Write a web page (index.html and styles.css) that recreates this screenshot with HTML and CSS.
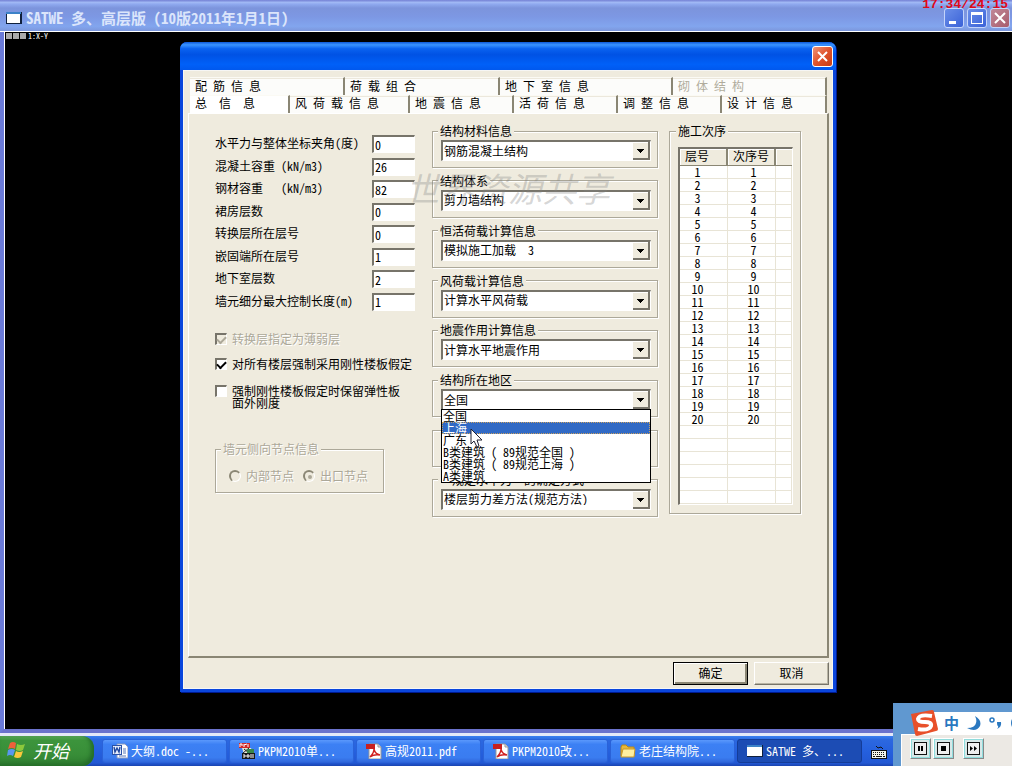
FILE: index.html
```html
<!DOCTYPE html>
<html lang="zh-CN">
<head>
<meta charset="utf-8">
<title>SATWE</title>
<link rel="stylesheet" href="styles.css">
</head>
<body>
<header class="titlebar">
  <svg class="app-icon" width="16" height="12" viewBox="0 0 16 12"><path d="M0 0h16v12H0z" fill="#10203c"/><path d="M0 0h15v2H0z" fill="#3c82c8"/><path d="M1 2h13v9H1z" fill="#fff"/></svg>
  <h1 class="app-title">SATWE 多、高层版 (10版2011年1月1日)</h1>
  <div class="win-buttons">
    <button class="win-btn" aria-label="最小化"><svg width="18" height="18" viewBox="0 0 18 18"><path d="M4 12h7v3H4z" fill="#fff"/></svg></button>
    <button class="win-btn" aria-label="最大化"><svg width="18" height="18" viewBox="0 0 18 18"><path d="M3 3h12v12H3zM4 6v8h10V6z" fill="#fff" fill-rule="evenodd"/></svg></button>
    <button class="win-btn win-close" aria-label="关闭"><svg width="18" height="18" viewBox="0 0 18 18"><path d="M4 4l10 10M14 4L4 14" stroke="#fff" stroke-width="2"/></svg></button>
  </div>
  <div class="timer">17:34/24:15</div>
</header>

<main class="canvas">
  <div class="view-tag"><i></i><i></i><i></i><span>1:X-Y</span></div>
</main>

<section class="dialog" role="dialog" aria-label="SATWE">
  <div class="dialog-bar">
    <button class="dialog-close" aria-label="关闭"><svg width="19" height="19" viewBox="0 0 19 19"><path d="M5 5l9 9M14 5l-9 9" stroke="#fff" stroke-width="2"/></svg></button>
  </div>
  <div class="dialog-body">
    <div class="tabs" role="tablist">
      <div class="tab-row tab-row-back">
        <button class="tab" role="tab">配 筋 信 息</button>
        <button class="tab" role="tab">荷 载 组 合</button>
        <button class="tab" role="tab">地 下 室 信 息</button>
        <button class="tab" role="tab" disabled>砌 体 结 构</button>
      </div>
      <div class="tab-row tab-row-front">
        <button class="tab tab-on" role="tab" aria-selected="true">总  信  息</button>
        <button class="tab" role="tab">风 荷 载 信 息</button>
        <button class="tab" role="tab">地 震 信 息</button>
        <button class="tab" role="tab">活 荷 信 息</button>
        <button class="tab" role="tab">调 整 信 息</button>
        <button class="tab" role="tab">设 计 信 息</button>
      </div>
    </div>

    <div class="panel">
      <div class="col-left">
        <div class="fields">
          <label for="f1">水平力与整体坐标夹角(度)</label><input id="f1" value="0">
          <label for="f2">混凝土容重 (kN/m3)</label><input id="f2" value="26">
          <label for="f3">钢材容重   (kN/m3)</label><input id="f3" value="82">
          <label for="f4">裙房层数</label><input id="f4" value="0">
          <label for="f5">转换层所在层号</label><input id="f5" value="0">
          <label for="f6">嵌固端所在层号</label><input id="f6" value="1">
          <label for="f7">地下室层数</label><input id="f7" value="2">
          <label for="f8">墙元细分最大控制长度(m)</label><input id="f8" value="1">
        </div>
        <div class="checks">
          <label class="check off"><input type="checkbox" checked disabled><span>转换层指定为薄弱层</span></label>
          <label class="check"><input type="checkbox" checked><span>对所有楼层强制采用刚性楼板假定</span></label>
          <label class="check"><input type="checkbox"><span>强制刚性楼板假定时保留弹性板<br>面外刚度</span></label>
        </div>
        <fieldset class="group nodes" disabled>
          <legend>墙元侧向节点信息</legend>
          <label><input type="radio" name="node"><span>内部节点</span></label>
          <label><input type="radio" name="node" checked><span>出口节点</span></label>
        </fieldset>
      </div>

      <div class="col-mid">
        <fieldset class="group"><legend>结构材料信息</legend><select aria-label="结构材料信息"><option>钢筋混凝土结构</option></select></fieldset>
        <fieldset class="group"><legend>结构体系</legend><select aria-label="结构体系"><option>剪力墙结构</option></select></fieldset>
        <fieldset class="group"><legend>恒活荷载计算信息</legend><select aria-label="恒活荷载计算信息"><option>模拟施工加载&nbsp; 3</option></select></fieldset>
        <fieldset class="group"><legend>风荷载计算信息</legend><select aria-label="风荷载计算信息"><option>计算水平风荷载</option></select></fieldset>
        <fieldset class="group"><legend>地震作用计算信息</legend><select aria-label="地震作用计算信息"><option>计算水平地震作用</option></select></fieldset>
        <fieldset class="group region"><legend>结构所在地区</legend><select aria-label="结构所在地区"><option>全国</option></select>
          <ul class="menu" role="listbox">
            <li role="option">全国</li>
            <li role="option" class="hot" aria-selected="true">上海</li>
            <li role="option">广东</li>
            <li role="option">B类建筑 ( 89规范全国 )</li>
            <li role="option">B类建筑 ( 89规范上海 )</li>
            <li role="option">A类建筑</li>
          </ul>
        </fieldset>
        <fieldset class="group bare"></fieldset>
        <fieldset class="group"><legend>“规定水平力”的确定方式</legend><select aria-label="“规定水平力”的确定方式"><option>楼层剪力差方法(规范方法)</option></select></fieldset>
      </div>

      <fieldset class="group col-right">
        <legend>施工次序</legend>
        <table class="order">
          <colgroup><col class="c1"><col class="c2"><col></colgroup>
          <thead><tr><th>层号</th><th>次序号</th><th></th></tr></thead>
          <tbody>
            <tr><td>1</td><td>1</td><td></td></tr>
            <tr><td>2</td><td>2</td><td></td></tr>
            <tr><td>3</td><td>3</td><td></td></tr>
            <tr><td>4</td><td>4</td><td></td></tr>
            <tr><td>5</td><td>5</td><td></td></tr>
            <tr><td>6</td><td>6</td><td></td></tr>
            <tr><td>7</td><td>7</td><td></td></tr>
            <tr><td>8</td><td>8</td><td></td></tr>
            <tr><td>9</td><td>9</td><td></td></tr>
            <tr><td>10</td><td>10</td><td></td></tr>
            <tr><td>11</td><td>11</td><td></td></tr>
            <tr><td>12</td><td>12</td><td></td></tr>
            <tr><td>13</td><td>13</td><td></td></tr>
            <tr><td>14</td><td>14</td><td></td></tr>
            <tr><td>15</td><td>15</td><td></td></tr>
            <tr><td>16</td><td>16</td><td></td></tr>
            <tr><td>17</td><td>17</td><td></td></tr>
            <tr><td>18</td><td>18</td><td></td></tr>
            <tr><td>19</td><td>19</td><td></td></tr>
            <tr><td>20</td><td>20</td><td></td></tr>
            <tr><td></td><td></td><td></td></tr>
            <tr><td></td><td></td><td></td></tr>
            <tr><td></td><td></td><td></td></tr>
            <tr><td></td><td></td><td></td></tr>
            <tr><td></td><td></td><td></td></tr>
            <tr><td></td><td></td><td></td></tr>
          </tbody>
        </table>
      </fieldset>
    </div>

    <div class="actions">
      <button class="push push-default">确定</button>
      <button class="push">取消</button>
    </div>
  </div>
</section>

<div class="watermark">世界资源共享</div>
<svg class="cursor" width="13" height="20" viewBox="0 0 13 20"><path d="M1 1v15l3-3 3 6 2-1-2-6h5z" fill="#fff" stroke="#223" stroke-width="1"/></svg>

<footer class="taskbar">
  <button class="start">
    <svg width="19" height="18" viewBox="0 0 19 18"><path d="M3 2q3-2 6 0L8 8Q5 6 1 8z" fill="#f0603a"/><path d="M10 3q4 2 8 0l-2 6q-3 2-7 0z" fill="#8cc83c"/><path d="M1 9q4-2 7 0l-2 6q-3-2-6 0z" fill="#5a96f0"/><path d="M9 10q3 2 7 0l-2 6q-3 2-7 0z" fill="#fac83c"/></svg>
    <span>开始</span>
  </button>
  <nav class="tasks">
    <button class="task"><svg width="16" height="16" viewBox="0 0 16 16"><path d="M5 1h8l3 3v11H5z" fill="#fff" stroke="#8899c0"/><path d="M11 6h3M11 8h3M11 10h3M7 13h7" stroke="#5878b8"/><path d="M0 2h10v10H0z" fill="#2a52a8"/><path d="M1 3h8v8H1z" fill="#e6eefc"/><path d="M2 4l1 5 2-4 2 4 1-5" fill="none" stroke="#2048a0" stroke-width="1.4"/></svg><span>大纲.doc -...</span></button>
    <button class="task"><svg width="16" height="16" viewBox="0 0 16 16"><path d="M0 0h11v5H0z" fill="#d02828"/><path d="M1 4V1h2v2M5 4V1M5 2l3-1M9 4V1" stroke="#fff" fill="none"/><path d="M3 5h9l2 6H5z" fill="#e8e8d8"/><path d="M5 6l5 4M10 5l-6 5" stroke="#222"/><path d="M8 6h7v4H8z" fill="#388848"/><path d="M3 10h13v6H3z" fill="#181818"/><path d="M4 12h2v2H4M8 12h2v2H8zM12 11v4M14 11v4" stroke="#fff" fill="none"/></svg><span>PKPM2010单...</span></button>
    <button class="task"><svg width="16" height="16" viewBox="0 0 16 16"><path d="M3 1h9l3 3v12H3z" fill="#fff" stroke="#999"/><path d="M12 1v3h3" fill="#ddd" stroke="#999"/><path d="M0 1h9v5H0z" fill="#c82020"/><path d="M4 14q4-4 4-8 1 5 6 6-6-1-10 2z" fill="none" stroke="#d02020" stroke-width="1.4"/></svg><span>高规2011.pdf</span></button>
    <button class="task"><svg width="16" height="16" viewBox="0 0 16 16"><path d="M3 1h9l3 3v12H3z" fill="#fff" stroke="#999"/><path d="M12 1v3h3" fill="#ddd" stroke="#999"/><path d="M0 1h9v5H0z" fill="#c82020"/><path d="M4 14q4-4 4-8 1 5 6 6-6-1-10 2z" fill="none" stroke="#d02020" stroke-width="1.4"/></svg><span>PKPM2010改...</span></button>
    <button class="task"><svg width="16" height="16" viewBox="0 0 16 16"><path d="M1 13V4l1-2h4l2 2h6v9z" fill="#e8b838" stroke="#b88818"/><path d="M1 14l2-8h12l-1 8z" fill="#fff0a0" stroke="#c89828"/></svg><span>老庄结构院...</span></button>
    <button class="task task-on"><svg width="16" height="12" viewBox="0 0 16 12"><path d="M0 0h16v12H0z" fill="#10203c"/><path d="M0 0h15v2H0z" fill="#3c82c8"/><path d="M0 2h15v9H0z" fill="#fff"/></svg><span>SATWE 多、...</span></button>
  </nav>
  <svg class="keys" width="16" height="13" viewBox="0 0 16 13"><path d="M5 0l2 2 3-1 2 2" stroke="#111" fill="none"/><path d="M0 4h16v9H0z" fill="#111"/><path d="M1 5h14v7H1z" fill="#f4f4e8"/><path d="M2 6.5h12M2 8.500h12" stroke="#111" stroke-dasharray="1 1"/><path d="M2 10.500h2M5 10.500h6M12 10.500h2" stroke="#111"/></svg>
</footer>

<aside class="ime">
  <div class="ime-bar">
    <svg class="ime-logo" width="28" height="28" viewBox="0 0 28 28"><path d="M1 5L22 1q2 0 2 2l4 17q0 2-2 2L7 27q-2 0-2-2z" fill="#e8502a"/><path d="M22 7Q9 5 8 10q0 3 7 3 7 0 6 4-2 5-13 3" fill="none" stroke="#fff" stroke-width="4"/></svg>
    <span class="ime-mode">中</span>
    <svg width="14" height="15" viewBox="0 0 14 15"><path d="M8 0q7 4 5 10-4 7-13 2 8 0 9-5 1-3-1-7z" fill="#2a78c0"/></svg>
    <svg width="13" height="13" viewBox="0 0 13 13"><circle cx="3" cy="3" r="2" fill="none" stroke="#2a78c0" stroke-width="1.500"/><path d="M8 5h4q1 5-4 7 2-2 1-3-1 0-1-4z" fill="#2a78c0"/></svg>
    <svg width="8" height="16" viewBox="0 0 8 16"><circle cx="9" cy="8" r="7" fill="none" stroke="#2a78c0" stroke-width="2"/></svg>
  </div>
  <div class="player">
    <button aria-label="暂停"><svg width="13" height="13" viewBox="0 0 13 13"><path d="M0 0h13v13H0z" fill="#111"/><path d="M1 1h11v11H1z" fill="#eee"/><path d="M4 4h2v5H4zM7 4h2v5H7z" fill="#000"/></svg></button>
    <button aria-label="停止"><svg width="13" height="13" viewBox="0 0 13 13"><path d="M0 0h13v13H0z" fill="#111"/><path d="M1 1h11v11H1z" fill="#eee"/><path d="M4 4h5v5H4z" fill="#000"/></svg></button>
    <button class="apart" aria-label="快进"><svg width="13" height="13" viewBox="0 0 13 13"><path d="M0 0h13v13H0z" fill="#111"/><path d="M1 1h11v11H1z" fill="#eee"/><path d="M3 4l3 2.500L3 9zM7 4l3 2.500L7 9z" fill="#000"/></svg></button>
  </div>
</aside>
</body>
</html>
```
FILE: styles.css
```css
* { box-sizing: border-box; }
html { height: 100%; }
body {
  margin: 0;
  height: 100%;
  display: flex;
  flex-direction: column;
  overflow: hidden;
  position: relative;
  background: #000;
  color: #000;
  font: 12px/12px "Noto Sans Mono CJK SC", "Noto Sans CJK SC", sans-serif;
}
button, input, select { font: inherit; color: inherit; margin: 0; border-radius: 0; }
svg { display: block; flex: none; }

/* main window */
.titlebar {
  flex: none;
  display: flex;
  align-items: center;
  height: 32px;
  padding: 4px 2px 0 6px;
  border-bottom: 1px solid #fff;
  background: linear-gradient(#7480d4, #a0b8f4 8%, #8ea8ee 14%, #7c94dc 26%, #7d98e4 55%, #82a5ee 85%, #7c97dc);
  position: relative;
}
.app-title { margin: 0 0 0 4px; font-size: 15px; line-height: 16px; font-weight: 700; color: #dbe5fb; white-space: pre; }
.win-buttons { margin-left: auto; display: flex; gap: 3px; }
.win-btn { width: 20px; height: 20px; padding: 0; border: 1px solid #c4d4fa; border-radius: 3px; background: linear-gradient(135deg, #6a8ee8, #3a62d8); }
.win-close { background: linear-gradient(135deg, #c08898, #a85c6c); }
.timer { position: absolute; right: 4px; top: -2px; font: 700 13px/13px "Liberation Mono", monospace; color: #e00818; }

.canvas { flex: 1; background: #000; border-left: 4px solid #6a7ad8; border-bottom: 4px solid #6a72cc; }
.view-tag { display: flex; gap: 1px; align-items: flex-start; padding-left: 1px; border-left: 1px solid #fff; height: 100%; color: #fff; font-size: 8px; line-height: 8px; }
.view-tag i { width: 6px; height: 6px; margin-top: 1px; background: #aaa; }
.view-tag span { margin-left: 1px; }

/* dialog window */
.dialog {
  position: absolute;
  left: 180px;
  top: 42px;
  width: 656px;
  border: 3px solid #0a46dc;
  border-top: 0;
  border-radius: 7px 7px 0 0;
  background: #0a46dc;
  box-shadow: inset 1px 0 #0831c0, 1px 1px #001a90;
}
.dialog-bar { height: 28px; margin: 0 -3px; padding: 0 3px; display: flex; align-items: center; justify-content: flex-end; border-radius: 7px 7px 0 0; background: linear-gradient(#0c58d8, #3a94ff 10%, #0a62f0 24%, #0052e4 45%, #0060f8 80%, #0058ee); }
.dialog-close { width: 21px; height: 21px; padding: 0; border: 1px solid #fff; border-radius: 3px; background: linear-gradient(135deg, #ee9478, #e0532c 50%, #c83c14); }
.dialog-body { background: #efebde; border: 1px solid #f6f6f4; padding: 6px 3px 3px 4px; }

.tabs { padding: 0 2px; }
.tab-row-back { display: grid; grid-template-columns: 155px 155px 173px 1fr; }
.tab-row-front { display: grid; grid-template-columns: 100px 120px 104px 104px 104px 1fr; }
.tab { height: 18px; padding: 0 0 2px 5px; border: 0; border-top: 1px solid #fbfaf4; border-right: 2px solid #8a8674; background: #fcfcfa; text-align: left; white-space: pre; box-shadow: inset 0 1px #ece8dc; }
.tab-row-front .tab { padding-bottom: 3px; }
.tab:disabled { color: #b0ac9c; }
.tab-on { background: #fff; box-shadow: none; }

.panel {
  display: flex;
  align-items: flex-start;
  height: 545px;
  padding: 10px 26px 0 26px;
  border: 1px solid #fff;
  border-right: 2px solid #8a8674;
  border-bottom: 2px solid #8a8674;
}
.col-left { width: 217px; flex: none; padding-top: 11px; }
.fields { display: grid; grid-template-columns: 157px 43px; grid-auto-rows: 1fr; height: 180px; align-items: start; white-space: pre; }
.fields label { line-height: 16px; }
.fields input { width: 43px; height: 18px; padding: 0 1px 1px; border: 2px solid; border-color: #77746a #fff #fff #77746a; border-width: 2px 1px 1px 2px; background: #fff; }

.checks { display: grid; gap: 13px; margin-top: 18px; }
.check { display: flex; gap: 5px; align-items: flex-start; white-space: nowrap; }
.check:nth-child(3) { margin-top: 2px; }
.check input { appearance: none; flex: none; width: 12px; height: 12px; border: 1px solid; border-color: #77746a #fff #fff #77746a; border-width: 2px 1px 1px 2px; background: #fff; display: grid; place-items: center; }
.check input:checked::before { content: ""; width: 7px; height: 4px; border-left: 2px solid #000; border-bottom: 2px solid #000; transform: rotate(-45deg); margin-bottom: 2px; }
.off { color: #aca899; text-shadow: 1px 1px #fff; }
.check.off input { background: #efebde; }
.check.off input:checked::before { border-color: #aca899; }

.group { margin: 0; min-width: 0; padding: 0 6px 5px 7px; border: 1px solid #aca899; box-shadow: 1px 1px #fff, inset 1px 1px #fff; }
.group legend { padding: 0 2px; margin-left: -2px; background: #efebde; line-height: 14px; }
.nodes { display: flex; align-items: flex-start; gap: 9px; width: 169px; height: 51px; margin-top: 33px; padding: 14px 0 0 13px; color: #aca899; text-shadow: 1px 1px #fff; }
.nodes legend { margin-left: -8px; }
.nodes label { display: flex; gap: 5px; align-items: center; }
.nodes input { appearance: none; width: 12px; height: 12px; border-radius: 50%; border: 1px solid; border-color: #8a8674 #fff #fff #8a8674; border-width: 2px 1px 1px 2px; display: grid; place-items: center; }
.nodes input:checked::before { content: ""; width: 4px; height: 4px; border-radius: 50%; background: #aca899; }

.col-mid { width: 226px; flex: none; height: 393px; display: flex; flex-direction: column; justify-content: space-between; }
.col-mid .group { height: 44px; flex: none; padding: 2px 6px 0 8px; }
.col-mid .group legend { margin-left: -3px; }
.col-mid .bare { height: 37px; margin-top: 7px; }
.col-mid select {
  display: block;
  width: 100%;
  height: 21px;
  padding: 0 1px 1px;
  appearance: none;
  border: 2px solid;
  border-color: #77746a #fff #fff #77746a;
  border-width: 2px 1px 1px 2px;
  background:
    linear-gradient(#000, #000) right 6px top 7px / 7px 1px no-repeat,
    linear-gradient(#000, #000) right 7px top 8px / 5px 1px no-repeat,
    linear-gradient(#000, #000) right 8px top 9px / 3px 1px no-repeat,
    linear-gradient(#000, #000) right 9px top 10px / 1px 1px no-repeat,
    linear-gradient(#efebde, #efebde) right 2px top 1px / 15px 15px no-repeat,
    linear-gradient(#fff, #fff) right 2px top 0 / 16px 16px no-repeat,
    linear-gradient(#77746a, #77746a) right 0 top 0 / 17px 18px no-repeat,
    #fff;
}
.region { position: relative; }
.menu { position: absolute; z-index: 2; left: 8px; right: 6px; top: 22px; margin: 0; padding: 0; list-style: none; border: 1px solid #000; background: #fff; }
.menu li { padding: 0 1px; line-height: 12px; white-space: pre; }
.menu .hot { background: #316ac5; color: #fff; outline: 1px dotted #c8a060; outline-offset: -1px; }

.col-right { width: 133px; margin-left: 11px; padding: 9px 7px 8px 8px; }
.order { width: 100%; table-layout: fixed; border-collapse: separate; border-spacing: 0; border: 2px solid; border-color: #77746a #fff #fff #77746a; border-width: 2px 1px 1px 2px; background: #fff; }
.c1 { width: 48px; }
.c2 { width: 48px; }
.order th { height: 17px; padding: 0 0 2px 5px; background: #efebde; text-align: left; font-weight: 400; border-right: 2px solid #8a8674; border-bottom: 1px solid #8a8674; box-shadow: inset 1px 1px #fff; white-space: nowrap; }
.order th:last-child { border-right: 0; }
.order td { height: 13px; padding: 0; line-height: 12px; border-right: 1px solid #e8e4d6; border-bottom: 1px solid #e8e4d6; text-align: center; padding-right: 12px; }
.order td + td { padding: 0 0 0 4px; }

.actions { display: flex; justify-content: flex-end; gap: 6px; padding-top: 4px; }
.push { width: 75px; height: 23px; padding: 0 0 2px; border: 1px solid; border-color: #fff #77746a #77746a #fff; background: #efebde; box-shadow: inset -1px -1px #b8b4a4; }
.push-default { border-color: #000; box-shadow: inset 1px 1px #fff, inset -2px -2px #8a8674; }

.watermark { position: absolute; left: 406px; top: 169px; font-size: 34px; line-height: 38px; font-style: italic; color: rgba(130, 130, 130, .32); pointer-events: none; white-space: nowrap; }
.cursor { position: absolute; left: 470px; top: 428px; z-index: 3; }

/* taskbar */
.taskbar { flex: none; display: flex; align-items: stretch; height: 33px; border-top: 3px solid #e4e8f8; background: linear-gradient(#3a80f0, #2c68e0 12%, #2560de 50%, #2258d4 90%, #1a44b0); }
.start { width: 94px; display: flex; align-items: center; gap: 7px; padding: 0 0 2px 7px; border: 0; border-radius: 0 12px 12px 0; background: linear-gradient(#5aa85a, #3c943c 15%, #388e38 60%, #2f7c30); color: #fff; font-size: 18px; line-height: 24px; font-style: italic; box-shadow: inset -3px -2px 4px #246c28; }
.tasks { flex: 0 1 760px; display: flex; gap: 2px; margin-left: 8px; padding: 3px 0; }
.task { flex: 1 1 0; min-width: 0; display: flex; align-items: center; gap: 3px; padding: 0 0 0 9px; border: 1px solid #2a62d8; border-radius: 3px; background: linear-gradient(#5a98fc, #3c80f4 20%, #3a7cf0 80%, #3068dc); color: #fff; white-space: pre; overflow: hidden; }
.task-on { background: #1c4cb4; border-color: #143c98; }
.keys { margin: 10px 0 0 9px; }

/* input method bar and player, floating over the desktop */
.ime { position: absolute; right: 0; bottom: 0; width: 119px; height: 63px; padding: 9px 0 0 8px; background: #6098d0; overflow: hidden; }
.ime-bar { display: flex; align-items: center; gap: 8px; height: 22px; margin-left: 22px; background: #fff; }
.ime-logo { margin: 0 -2px 0 -13px; position: relative; z-index: 1; }
.ime-mode { color: #2a78c0; font-size: 15px; font-weight: 700; line-height: 16px; }
.player { display: flex; gap: 2px; height: 32px; padding: 3px 0 0 8px; background: #ece9e4; border-top: 1px solid #fff; border-left: 1px solid #fff; }
.player button { width: 21px; height: 21px; padding: 0; display: grid; place-items: center; border: 1px solid; border-color: #fff #888 #888 #fff; background: #d8e8e8; box-shadow: inset 0 0 0 1px #90dcdc; }
.player .apart { margin-left: 7px; }
```
